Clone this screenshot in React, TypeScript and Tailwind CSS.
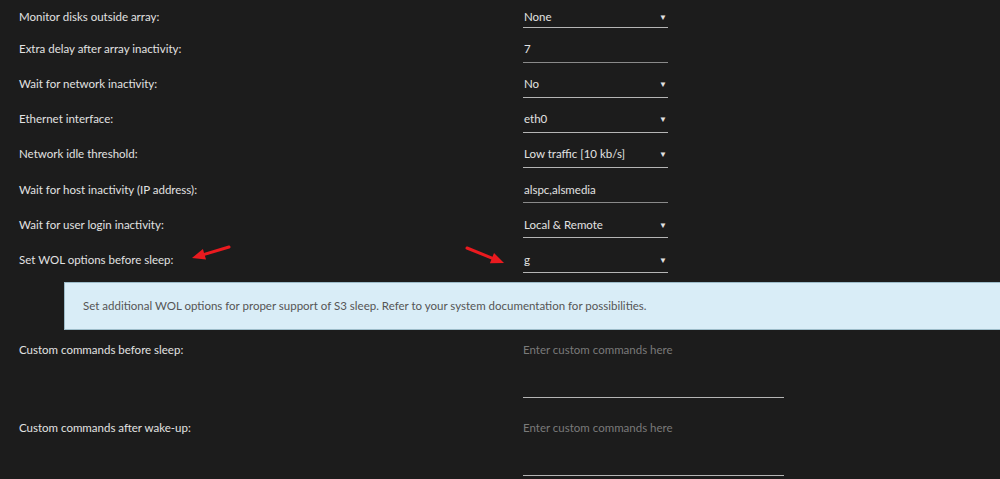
import React from "react";

type Row = { label: string; value: string; kind: "select" | "input" };

const rows: Row[] = [
  { label: "Monitor disks outside array:", value: "None", kind: "select" },
  { label: "Extra delay after array inactivity:", value: "7", kind: "input" },
  { label: "Wait for network inactivity:", value: "No", kind: "select" },
  { label: "Ethernet interface:", value: "eth0", kind: "select" },
  { label: "Network idle threshold:", value: "Low traffic [10 kb/s]", kind: "select" },
  { label: "Wait for host inactivity (IP address):", value: "alspc,alsmedia", kind: "input" },
  { label: "Wait for user login inactivity:", value: "Local & Remote", kind: "select" },
  { label: "Set WOL options before sleep:", value: "g", kind: "select" },
];

function Arrow({ x1, y1, x2, y2 }: { x1: number; y1: number; x2: number; y2: number }) {
  const a = Math.atan2(y2 - y1, x2 - x1);
  const len = 13;
  const w = 5.5;
  const bx = x2 - len * Math.cos(a);
  const by = y2 - len * Math.sin(a);
  const px = -Math.sin(a) * w;
  const py = Math.cos(a) * w;
  return (
    <g>
      <line x1={x1} y1={y1} x2={bx + 2 * Math.cos(a)} y2={by + 2 * Math.sin(a)} stroke="#ea1a1f" strokeWidth={3} strokeLinecap="round" />
      <polygon points={`${x2},${y2} ${bx + px},${by + py} ${bx - px},${by - py}`} fill="#ea1a1f" />
    </g>
  );
}

export default function App() {
  return (
    <div
      className="relative w-[1000px] h-[479px] overflow-hidden bg-[#1c1c1c] text-[11.5px] text-[#e2e2e2]"
      style={{ fontFamily: "Lato, 'Noto Sans', sans-serif" }}
    >
      {rows.map((r, i) => (
        <div key={r.label} className="flex h-[35px]">
          <div className={`w-[523px] pl-[19px] leading-[14px] ${i === 0 ? "pt-[10px]" : i > 4 ? "pt-[8px]" : "pt-[7px]"}`}>
            {r.label}
          </div>
          <div
            className={`flex w-[145px] h-[28px] items-start justify-between leading-[14px] border-b ${
              i === 0 ? "pt-[10px]" : i > 4 ? "pt-[8px]" : "pt-[7px]"
            } ${r.kind === "select" ? "border-[#b5b5b5]" : "border-[#8a8a8a]"}`}
          >
            <span className="pl-[1px]">{r.value}</span>
            {r.kind === "select" && <span className="pr-[1px] text-[8px] leading-[14px]">▼</span>}
          </div>
        </div>
      ))}

      <div className="mt-[2px] ml-[64px] h-[48px] flex items-center pl-[18px] bg-[#d9edf7] border border-r-0 border-[#9dbcc9] text-[#555]">
        Set additional WOL options for proper support of S3 sleep. Refer to your system documentation for
        possibilities.
      </div>

      {["Custom commands before sleep:", "Custom commands after wake-up:"].map((l) => (
        <div key={l} className="flex h-[78px]">
          <div className="w-[523px] pl-[19px] pt-[13px] leading-[14px]">{l}</div>
          <div className="w-[261px] h-[68px] pt-[13px] leading-[14px] border-b border-[#b5b5b5] text-[#7a7a7a]">
            Enter custom commands here
          </div>
        </div>
      ))}

      <svg className="absolute inset-0 pointer-events-none" width={1000} height={479}>
        <Arrow x1={229} y1={247} x2={192} y2={258} />
        <Arrow x1={467} y1={248} x2={504} y2={263} />
      </svg>
    </div>
  );
}
